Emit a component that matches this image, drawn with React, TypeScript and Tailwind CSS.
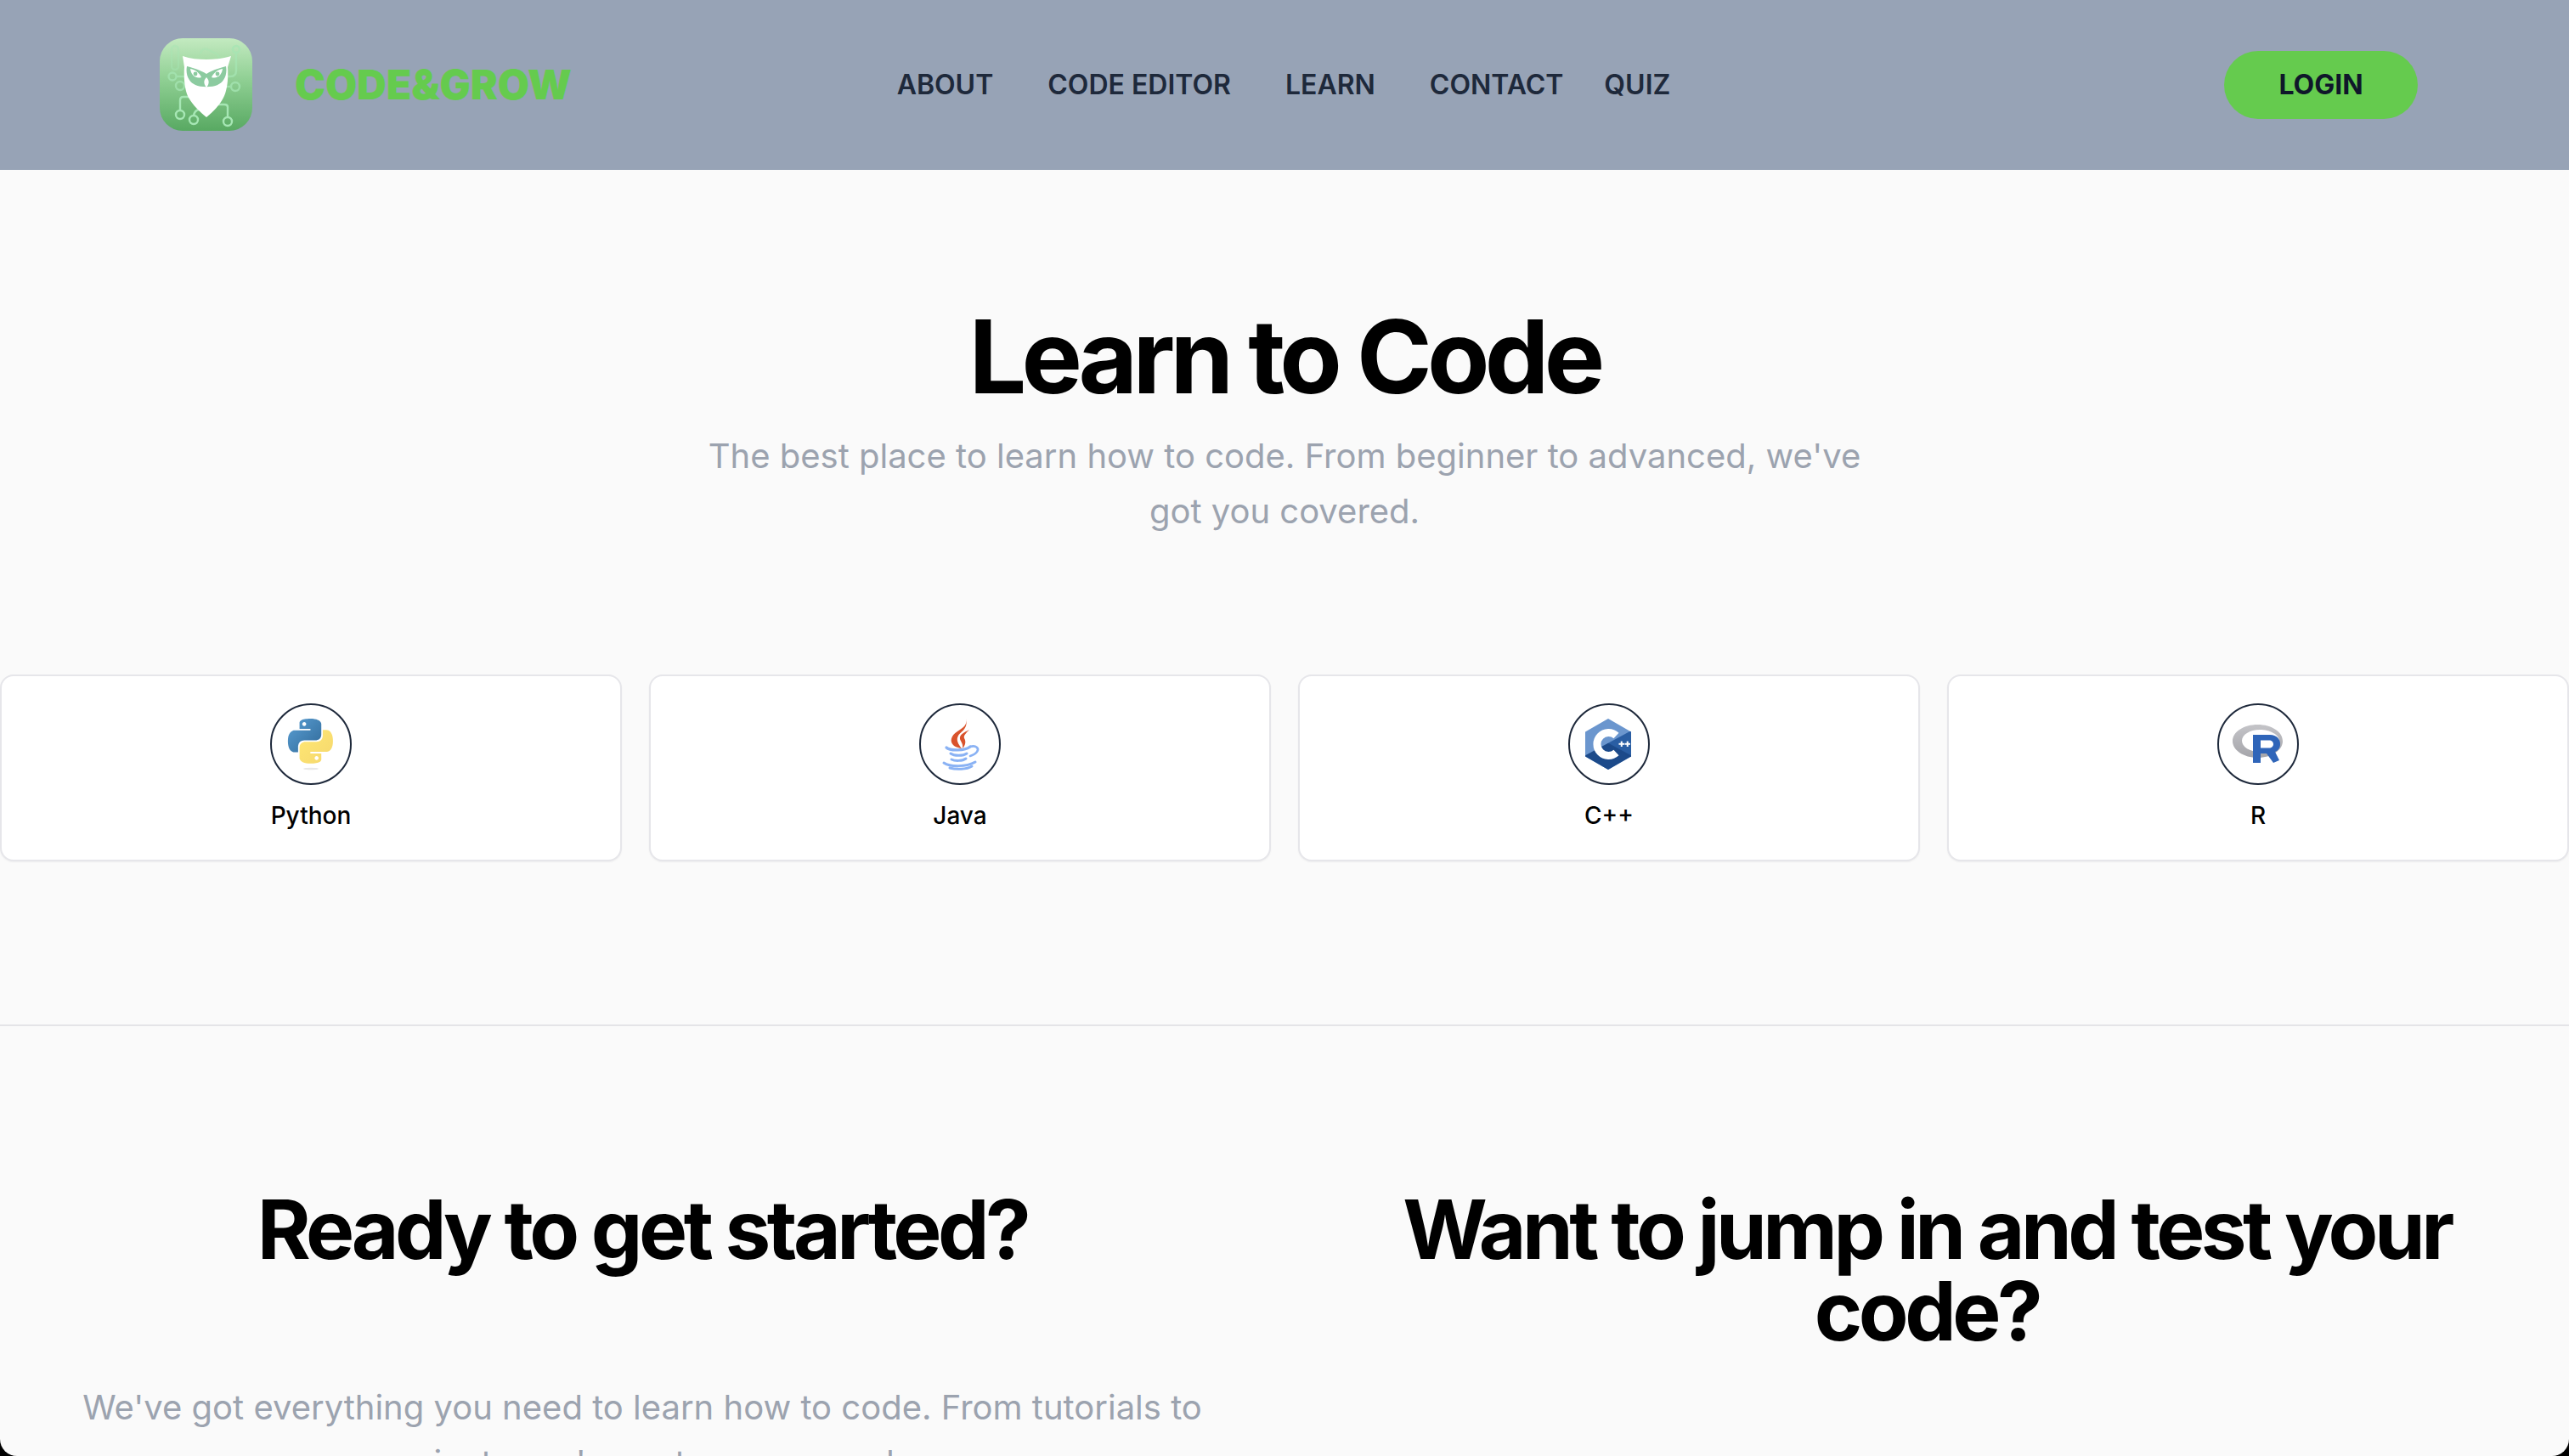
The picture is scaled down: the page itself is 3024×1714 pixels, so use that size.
import React from 'react';

const FONT = "font-['Inter','Liberation_Sans',sans-serif]";

const OwlLogo = () => (
  <svg viewBox="0 0 110 110" className="h-[110px] w-[110px]">
    <defs>
      <linearGradient id="owlBg" x1="0" y1="0" x2="0" y2="1">
        <stop offset="0" stopColor="#c3eac0" />
        <stop offset="0.45" stopColor="#8fcf93" />
        <stop offset="1" stopColor="#58a962" />
      </linearGradient>
    </defs>
    <rect x="0" y="0" width="109" height="109" rx="27" fill="url(#owlBg)" />
    {/* circuit traces */}
    <g fill="none" stroke="#a6e6b4" strokeWidth="2.4" opacity="0.75">
      <circle cx="90" cy="13" r="4" />
      <path d="M90 17 V38 Q90 45 83 45 H78" />
      <rect x="14" y="9" width="8" height="28" rx="4" opacity="0.6" />
      <path d="M48 18 Q50 11 56 13 L66 18 Q70 20 70 24" opacity="0.6" />
      <circle cx="15" cy="45" r="4.5" />
      <path d="M20 45 H30" />
      <circle cx="24" cy="56" r="5" />
      <circle cx="89" cy="57" r="5" />
      <path d="M84 57 H78" />
    </g>
    <g fill="none" stroke="#a6e6b4" strokeWidth="2.4">
      <circle cx="24" cy="90" r="5" />
      <path d="M24 85 V73 Q24 69 28 69 H34" />
      <circle cx="40" cy="96" r="5" />
      <path d="M40 91 Q41 85 46 84" />
      <circle cx="80" cy="98" r="5" />
      <path d="M80 93 V81 Q80 78 76 78 H68" />
    </g>
    <path d="M27 21 C36 24 46 25 55 25 C64 25 74 24 84 21 L80 34 C81 50 79 62 75 70 C70 80 62 87 55 93 C48 87 39 79 34 70 C30 62 28 50 29 34 Z" fill="#fff" />
    <path d="M32 33 C40 35 49 38 55 42 C61 38 70 35 78 33 C80 44 75 52 68 55 C62 58 48 58 42 55 C35 52 30 44 32 33 Z" fill="#8ccba0" />
    <path d="M36 36 C42 37 47 41 49 46 C43 48 37 44 36 36 Z" fill="#fff" />
    <path d="M74 36 C68 37 63 41 61 46 C67 48 73 44 74 36 Z" fill="#fff" />
    <circle cx="42" cy="42" r="2.4" fill="#8ccba0" />
    <circle cx="68" cy="42" r="2.4" fill="#8ccba0" />
    <path d="M55 46 C58 49 59 53 55 58 C51 53 52 49 55 46 Z" fill="#fff" />
  </svg>
);

const PythonIcon = () => (
  <svg viewBox="2 2 92 92" className="h-full w-full">
    <defs>
      <linearGradient id="pyBlue" x1="0" y1="0" x2="1" y2="1">
        <stop offset="0" stopColor="#5a9fd4" />
        <stop offset="1" stopColor="#306998" />
      </linearGradient>
      <linearGradient id="pyYellow" x1="0" y1="0" x2="1" y2="1">
        <stop offset="0" stopColor="#ffe873" />
        <stop offset="1" stopColor="#f5d76e" />
      </linearGradient>
    </defs>
    <ellipse cx="48" cy="77" rx="9" ry="1.3" fill="#e8e8e8" />
    <g transform="translate(21 18) scale(2.2)">
      <path fill="url(#pyBlue)" fillRule="evenodd" d="M14.25.18l.9.2.73.26.59.3.45.32.34.34.25.34.16.33.1.3.04.26.02.2-.01.13V8.5l-.05.63-.13.55-.21.46-.26.38-.3.31-.33.25-.35.19-.35.14-.33.1-.3.07-.26.04-.21.02H8.77l-.69.05-.59.14-.5.22-.41.27-.33.32-.27.35-.2.36-.15.37-.1.35-.07.32-.04.27-.02.21v3.06H3.17l-.21-.03-.28-.07-.32-.12-.35-.18-.36-.26-.36-.36-.35-.46-.32-.59-.28-.73-.21-.88-.14-1.05-.05-1.23.06-1.22.16-1.04.24-.87.32-.71.36-.57.4-.44.42-.33.42-.24.4-.16.36-.1.32-.05.24-.01h.16l.06.01h8.16v-.83H6.18l-.01-2.75-.02-.37.05-.34.11-.31.17-.28.25-.26.31-.23.38-.2.44-.18.51-.15.58-.12.64-.1.71-.06.77-.04.84-.02 1.27.05zm-6.3 1.98l-.23.33-.08.41.08.41.23.34.33.22.41.09.41-.09.33-.22.23-.34.08-.41-.08-.41-.23-.33-.33-.22-.41-.09-.41.09z" />
      <path fill="url(#pyYellow)" fillRule="evenodd" d="M21.04 6.11l.28.06.32.12.35.18.36.27.36.35.35.47.32.59.28.73.21.88.14 1.04.05 1.23-.06 1.23-.16 1.04-.24.86-.32.71-.36.57-.4.45-.42.33-.42.24-.4.16-.36.09-.32.05-.24.02-.16-.01h-8.22v.82h5.84l.01 2.76.02.36-.05.34-.11.31-.17.29-.25.25-.31.24-.38.2-.44.17-.51.15-.58.13-.64.09-.71.07-.77.04-.84.01-1.27-.04-1.07-.14-.9-.2-.73-.25-.59-.3-.45-.33-.34-.34-.25-.34-.16-.33-.1-.3-.04-.25-.02-.2.01-.13v-5.34l.05-.64.13-.54.21-.46.26-.38.3-.32.33-.24.35-.2.35-.14.33-.1.3-.06.26-.04.21-.02.13-.01h5.84l.69-.05.59-.14.5-.21.41-.28.33-.32.27-.35.2-.36.15-.36.1-.35.07-.32.04-.28.02-.21V6.07h2.09l.14.01zm-6.47 14.25l-.23.33-.08.41.08.41.23.33.33.23.41.08.41-.08.33-.23.23-.33.08-.41-.08-.41-.23-.33-.33-.23-.41-.08-.41.08z" />
    </g>
  </svg>
);

const JavaIcon = () => (
  <svg viewBox="2 2 92 92" className="h-full w-full">
    <path fill="#d9532c" d="M55 18 C57 26 51 29 45 33 C37 38 36 45 40 49 C43 52 46 52 50 53 C46 48 43 43 46 38 C49 33 58 30 55 18 Z" />
    <path fill="#d9532c" d="M59 31 C53 34 47 37 48 42 C49 45 52 48 51 53 C55 49 55 44 53 41 C52 38 55 35 59 31 Z" />
    <g fill="none" stroke="#8ab2f4" strokeLinecap="round">
      <path strokeWidth="3.2" d="M32 52 C36 56 54 56 60 51" />
      <path strokeWidth="3" d="M37 59 C41 62 52 62 56 59" />
      <path strokeWidth="3" d="M38 66 C42 68 51 68 55 65" />
      <path strokeWidth="3" d="M29 70 C36 75 56 75 66 69" />
      <path strokeWidth="3" d="M36 76 C43 78 56 78 62 74" />
      <path strokeWidth="2.6" d="M60 51 C67 49 71 53 68 57 C66 60 63 61 60 62" />
    </g>
  </svg>
);

const CppIcon = () => (
  <svg viewBox="2 2 92 92" className="h-full w-full">
    <g strokeLinejoin="round" strokeWidth="2">
      <path fill="#6b96ce" stroke="#6b96ce" d="M47 19 L73 34 V62 L47 77 L21 62 V34 Z" />
      <path fill="#2a5ea3" stroke="#2a5ea3" d="M73 34 L47 48 L73 62 Z" />
      <path fill="#1c4a8a" stroke="#1c4a8a" d="M21 62 L47 48 L73 62 L47 77 Z" />
    </g>
    <path fill="none" stroke="#fff" strokeWidth="9" d="M56.5 38 A13.5 13.5 0 1 0 56.5 58" />
    <g fill="#fff">
      <rect x="59.5" y="46.8" width="6.5" height="2" />
      <rect x="61.75" y="44.6" width="2" height="6.4" />
      <rect x="66.5" y="46.8" width="6.5" height="2" />
      <rect x="68.75" y="44.6" width="2" height="6.4" />
    </g>
  </svg>
);

const RIcon = () => (
  <svg viewBox="2 2 92 92" className="h-full w-full">
    <defs>
      <linearGradient id="rGray" x1="0" y1="0" x2="0" y2="1">
        <stop offset="0" stopColor="#c4c4c8" />
        <stop offset="1" stopColor="#a5a5aa" />
      </linearGradient>
    </defs>
    <path fill="url(#rGray)" fillRule="evenodd" d="M47.5 25 C64 25 77 33.5 77 44.5 C77 55 64 64 47.5 64 C31 64 18 55 18 44.5 C18 33.5 31 25 47.5 25 Z M50 31 C38 31 29 37 29 44 C29 51 38 57 50 57 C62 57 73 51 73 44 C73 37 62 31 50 31 Z" />
    <path fill="#2f65b9" fillRule="evenodd" d="M42 37 H62 C70 37 74 42 74 48 C74 53 71 56 68 57 L73 67 L66 70 L58 59 H51 V70 H42 Z M51 43.5 V52.5 H61 C64 52.5 66 50.5 66 48 C66 45.5 64 43.5 61 43.5 Z" />
  </svg>
);

const languages = [
  { name: 'Python', Icon: PythonIcon },
  { name: 'Java', Icon: JavaIcon },
  { name: 'C++', Icon: CppIcon },
  { name: 'R', Icon: RIcon },
];

export default function App() {
  return (
    <div className={`h-[1714px] w-full overflow-hidden bg-black ${FONT}`}>
      <div className="h-full overflow-hidden rounded-b-[20px] bg-[#fafafa]">
        {/* Header */}
        <header className="grid h-[200px] grid-cols-[1fr_auto_1fr] items-center bg-[#97a3b6] pl-[188px] pr-[178px]">
          <div className="flex items-center gap-[49px]">
            <OwlLogo />
            <span className="text-[48px] font-black leading-none text-[#65cb4e]">CODE&amp;GROW</span>
          </div>
          <nav className="mr-[12px] flex items-center gap-[64px] text-[32px] font-semibold leading-none text-[#1e293b]">
            <a>ABOUT</a>
            <a>CODE EDITOR</a>
            <a>LEARN</a>
            <a>CONTACT</a>
            <a className="-ml-4">QUIZ</a>
          </nav>
          <button className="h-[80px] w-[228px] justify-self-end rounded-full bg-[#65cb4e] text-[32px] font-bold text-[#0f172a]">
            LOGIN
          </button>
        </header>

        {/* Hero and languages */}
        <section className="h-[1008px] border-b-2 border-[#e4e4e7] pt-[160px] text-center">
          <h1 className="text-[120px] font-bold leading-none tracking-[-5.7px] text-black">Learn to Code</h1>
          <p className="mx-auto mt-[24px] max-w-[1400px] text-[40px] leading-[65px] text-[#9ca3af]">
            The best place to learn how to code. From beginner to advanced, we've got you covered.
          </p>
          <div className="mt-[160px] grid grid-cols-4 gap-[32px]">
            {languages.map(({ name, Icon }) => (
              <div key={name} className="flex flex-col items-center rounded-[16px] border-2 border-[#e6e6ea] bg-white p-[32px] shadow-xs">
                <div className="h-[96px] w-[96px] rounded-full border-2 border-[#1e293b] bg-white">
                  <Icon />
                </div>
                <span className="mt-[16px] text-[28px] font-medium leading-[40px] text-black">{name}</span>
              </div>
            ))}
          </div>
        </section>

        {/* Call to action columns */}
        <section className="grid grid-cols-2 items-start pt-[191px] text-center">
          <div className="px-[48px]">
            <h2 className="text-[96px] font-bold leading-none tracking-[-4.5px] text-black">Ready to get started?</h2>
            <p className="mt-[129px] text-[40px] leading-[65px] text-[#9ca3af]">
              We've got everything you need to learn how to code. From tutorials to projects, we've got you covered.
            </p>
          </div>
          <div className="px-[48px]">
            <h2 className="text-[96px] font-bold leading-none tracking-[-4.5px] text-black">Want to jump in and test your code?</h2>
          </div>
        </section>
      </div>
    </div>
  );
}
